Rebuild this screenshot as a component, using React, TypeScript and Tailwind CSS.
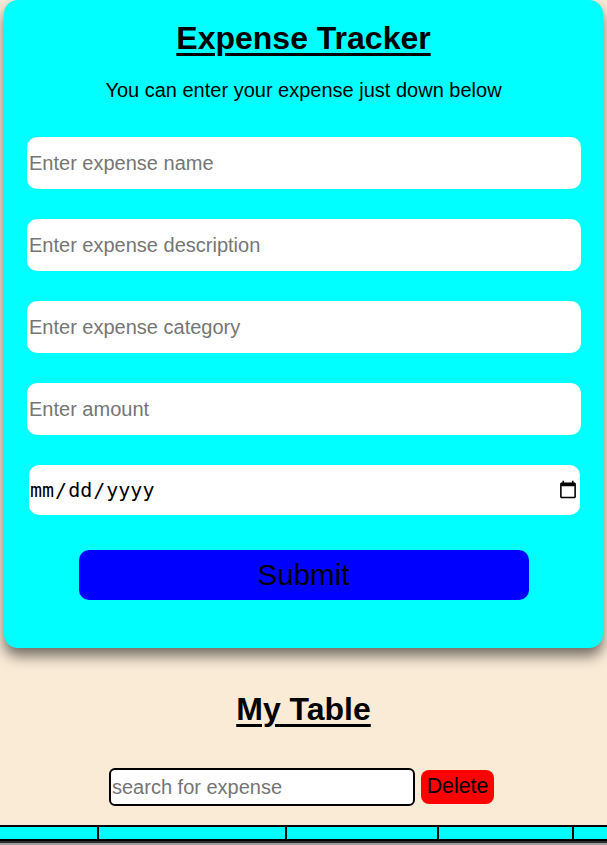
import { useState } from 'react';

const fieldClass =
  'block h-[52px] w-[554px] rounded-[10px] bg-white px-[2px] text-[20px] text-black outline-none placeholder:text-[#757575]';

function App() {
  const [search, setSearch] = useState('');

  return (
    <div className="min-h-screen bg-[#faebd7] font-['Liberation_Sans',Arial,sans-serif] text-black">
      <div className="ml-[4px] w-[599px] rounded-[14px] bg-[#00ffff] pb-[48px] pt-[20px] shadow-[0_8px_14px_rgba(0,0,0,0.55)]">
        <h1 className="text-center text-[32px] font-bold leading-[37px] underline decoration-[3px] underline-offset-[4px]">
          Expense Tracker
        </h1>
        <p className="mt-[22px] text-center text-[20px] leading-[23px]">
          You can enter your expense just down below
        </p>

        <form className="mt-[35px] flex flex-col" onSubmit={(e) => e.preventDefault()}>
          <input className={`ml-[23px] ${fieldClass}`} placeholder="Enter expense name" />
          <input className={`ml-[23px] mt-[30px] ${fieldClass}`} placeholder="Enter expense description" />
          <input className={`ml-[23px] mt-[30px] ${fieldClass}`} placeholder="Enter expense category" />
          <input className={`ml-[23px] mt-[30px] ${fieldClass}`} placeholder="Enter amount" />
          <input
            type="date"
            className="ml-[25px] mt-[30px] block h-[50px] w-[551px] rounded-[10px] bg-white px-0 font-['DejaVu_Sans_Mono',monospace] text-[20px] text-black outline-none"
          />
          <button
            type="submit"
            className="mx-auto mt-[35px] block h-[50px] w-[450px] rounded-[10px] bg-[#0000ff] text-[29.5px] text-black"
          >
            Submit
          </button>
        </form>
      </div>

      <h2 className="mt-[43px] text-center text-[32px] font-bold leading-[37px] underline decoration-[3px] underline-offset-[4px]">
        My Table
      </h2>

      <div className="mt-[40px] flex items-center justify-center gap-[6px] pr-[4px]">
        <input
          value={search}
          onChange={(e) => setSearch(e.target.value)}
          placeholder="search for expense"
          className="h-[38px] w-[306px] rounded-[6px] border-2 border-black bg-white px-[1px] text-[20px] outline-none placeholder:text-[#757575]"
        />
        <button className="h-[34px] w-[73px] rounded-[8px] bg-[#ff0000] text-[21.3px] text-black">
          Delete
        </button>
      </div>

      <div className="mt-[19px] overflow-hidden">
        <div className="flex h-[16px] border-y-2 border-black bg-[#00ffff]">
          <div className="w-[99px] border-r-2 border-black" />
          <div className="w-[188px] border-r-2 border-black" />
          <div className="w-[152px] border-r-2 border-black" />
          <div className="w-[135px] border-r-2 border-black" />
          <div className="flex-1" />
        </div>
        <div className="h-[2px] bg-[#2b2b2b]" />
        <div className="h-[12px] bg-[#9e9e9e]" />
      </div>
    </div>
  );
}

export default App;
